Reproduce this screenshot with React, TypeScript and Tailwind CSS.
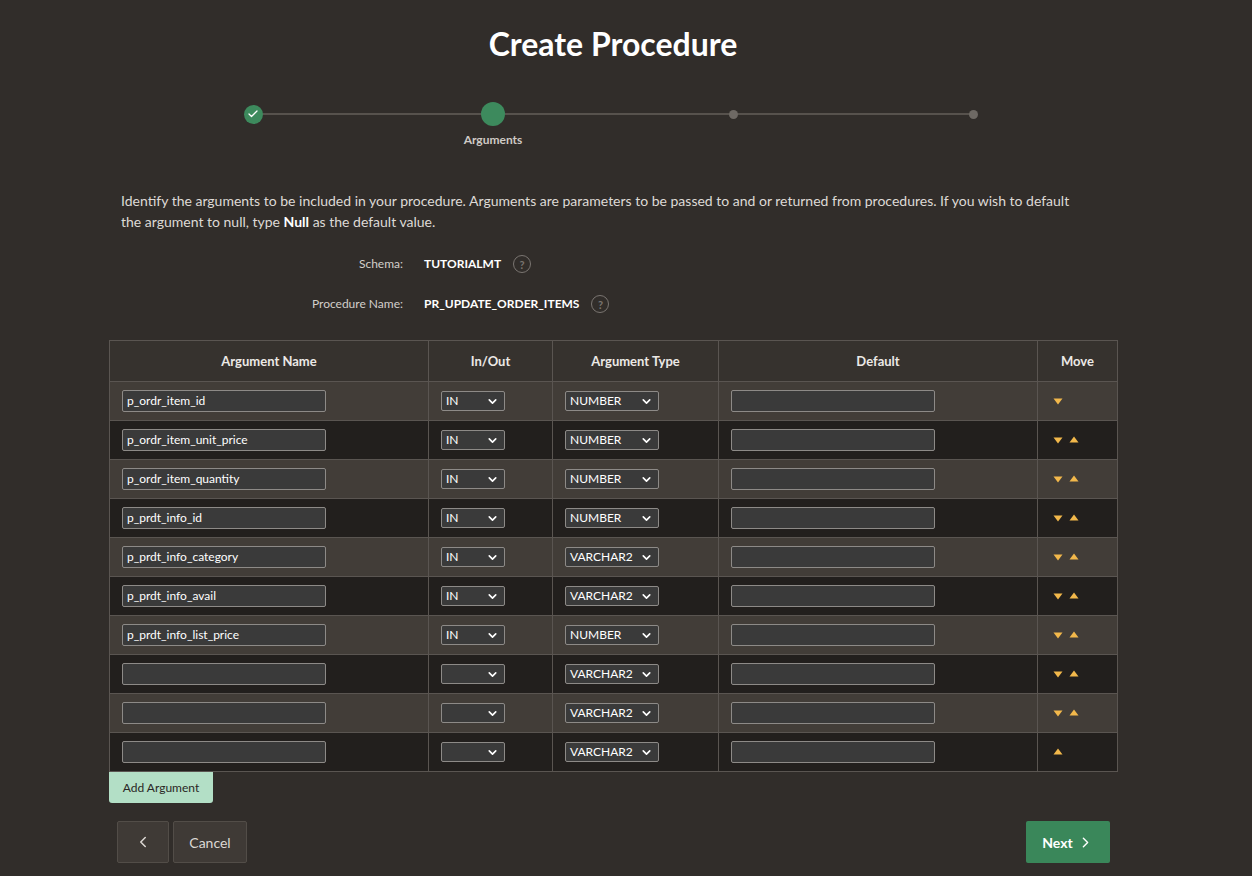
import { ChevronDown, ChevronLeft, ChevronRight, Check } from "lucide-react"

type Row = { name: string; io: string; type: string; down: boolean; up: boolean }

const rows: Row[] = [
  { name: "p_ordr_item_id", io: "IN", type: "NUMBER", down: true, up: false },
  { name: "p_ordr_item_unit_price", io: "IN", type: "NUMBER", down: true, up: true },
  { name: "p_ordr_item_quantity", io: "IN", type: "NUMBER", down: true, up: true },
  { name: "p_prdt_info_id", io: "IN", type: "NUMBER", down: true, up: true },
  { name: "p_prdt_info_category", io: "IN", type: "VARCHAR2", down: true, up: true },
  { name: "p_prdt_info_avail", io: "IN", type: "VARCHAR2", down: true, up: true },
  { name: "p_prdt_info_list_price", io: "IN", type: "NUMBER", down: true, up: true },
  { name: "", io: "", type: "VARCHAR2", down: true, up: true },
  { name: "", io: "", type: "VARCHAR2", down: true, up: true },
  { name: "", io: "", type: "VARCHAR2", down: false, up: true },
]

function Select({ value, width }: { value: string; width: string }) {
  return (
    <div
      className={`${width} flex h-[20px] items-center justify-between rounded-[2px] border border-[#8d8a87] bg-[#3a3a3a] pl-[4px] pr-[5px] text-[12px] text-white`}
    >
      <span>{value}</span>
      <ChevronDown className="h-[13px] w-[13px] text-white" strokeWidth={3} />
    </div>
  )
}

function TextBox({ value }: { value: string }) {
  return (
    <div className="flex h-[22px] w-[204px] items-center rounded-[2px] border border-[#8d8a87] bg-[#3a3a3a] px-[4px] text-[12px] text-white">
      {value}
    </div>
  )
}

function Down() {
  return (
    <svg width="10" height="8" viewBox="0 0 10 8">
      <path d="M0.5 1.5h9L5 7.5z" fill="#f2b84b" />
    </svg>
  )
}

function Up() {
  return (
    <svg width="10" height="8" viewBox="0 0 10 8">
      <path d="M0.5 6.5h9L5 0.5z" fill="#f2b84b" />
    </svg>
  )
}

function Help() {
  return (
    <span className="flex h-[18px] w-[18px] items-center justify-center rounded-full border-[1.5px] border-[#7a7571] text-[11px] font-bold leading-none text-[#7a7571]">
      ?
    </span>
  )
}

export default function App() {
  return (
    <div className="min-h-screen w-full bg-[#312d2a] font-['Lato',sans-serif] text-[#e7e4e1]">
      <div className="w-[1226px] pb-[13px]">
        {/* Title */}
        <h1 className="pt-[24px] text-center text-[32px] font-bold leading-[40px] text-white">Create Procedure</h1>

        {/* Stepper */}
        <div className="relative mx-auto mt-[38px] flex w-[744px] items-center justify-between">
          <div className="absolute left-[12px] right-[12px] top-[11px] h-[2px] bg-[#57524d]" />
          <div className="relative flex h-[24px] w-[24px] items-center justify-center">
            <span className="flex h-[19px] w-[19px] items-center justify-center rounded-full bg-[#3d8a5d]">
              <Check className="h-[12px] w-[12px] text-white" strokeWidth={2.5} />
            </span>
          </div>
          <div className="relative flex h-[24px] w-[24px] items-center justify-center">
            <span className="h-[24px] w-[24px] rounded-full bg-[#3d8a5d]" />
            <span className="absolute top-[29px] left-1/2 -translate-x-1/2 text-[12px] font-bold text-[#cfcac5]">
              Arguments
            </span>
          </div>
          <div className="relative flex h-[24px] w-[24px] items-center justify-center">
            <span className="h-[9px] w-[9px] rounded-full bg-[#6e6964]" />
          </div>
          <div className="relative flex h-[24px] w-[24px] items-center justify-center">
            <span className="h-[9px] w-[9px] rounded-full bg-[#6e6964]" />
          </div>
        </div>

        {/* Description */}
        <p className="mt-[64px] w-[1086px] pl-[121px] pr-[5px] text-[14px] leading-[21px] text-[#dedad6]">
          Identify the arguments to be included in your procedure. Arguments are parameters to be passed to and or returned
          from procedures. If you wish to default the argument to null, type <b className="text-white">Null</b> as the
          default value.
        </p>

        {/* Info */}
        <div className="mt-[22px] flex flex-col gap-[20px] pl-[121px]">
          <div className="flex h-[20px] items-center gap-[21px]">
            <span className="w-[282px] text-right text-[12px] text-[#d3cfcb]">Schema:</span>
            <span className="text-[12px] font-bold text-white">TUTORIALMT</span>
            <span className="ml-[-9px]">
              <Help />
            </span>
          </div>
          <div className="flex h-[20px] items-center gap-[21px]">
            <span className="w-[282px] text-right text-[12px] text-[#d3cfcb]">Procedure Name:</span>
            <span className="text-[12px] font-bold text-white">PR_UPDATE_ORDER_ITEMS</span>
            <span className="ml-[-9px]">
              <Help />
            </span>
          </div>
        </div>

        {/* Table */}
        <div className="ml-[109px] mt-[26px] w-[1008px]">
          <table className="w-full table-fixed border-collapse text-[12px]">
            <colgroup>
              <col className="w-[319px]" />
              <col className="w-[124px]" />
              <col className="w-[166px]" />
              <col className="w-[319px]" />
              <col className="w-[80px]" />
            </colgroup>
            <thead>
              <tr className="h-[41px] bg-[#36322e]">
                {["Argument Name", "In/Out", "Argument Type", "Default", "Move"].map((h) => (
                  <th key={h} className="border border-[#5a5551] pt-[1px] text-center text-[13px] font-bold text-[#ece9e6]">
                    {h}
                  </th>
                ))}
              </tr>
            </thead>
            <tbody>
              {rows.map((r, i) => (
                <tr key={i} className={`h-[39px] ${i % 2 === 0 ? "bg-[#423d38]" : "bg-[#221f1d]"}`}>
                  <td className="border border-[#5a5551] pl-[12px]">
                    <TextBox value={r.name} />
                  </td>
                  <td className="border border-[#5a5551] pl-[12px]">
                    <Select value={r.io} width="w-[64px]" />
                  </td>
                  <td className="border border-[#5a5551] pl-[12px]">
                    <Select value={r.type} width="w-[94px]" />
                  </td>
                  <td className="border border-[#5a5551] pl-[12px]">
                    <TextBox value="" />
                  </td>
                  <td className="border border-[#5a5551] pl-[15px]">
                    <div className="flex items-center gap-[6px]">
                      {r.down && <Down />}
                      {r.up && <Up />}
                    </div>
                  </td>
                </tr>
              ))}
            </tbody>
          </table>
          <button className="flex h-[31px] w-[104px] items-center justify-center rounded-b-[3px] bg-[#b3dfc6] text-[12px] text-[#2a2725]">
            Add Argument
          </button>

          {/* Footer buttons */}
          <div className="mt-[18px] flex items-center justify-between pl-[8px] pr-[7px]">
            <div className="flex gap-[4px]">
              <button className="flex h-[42px] w-[52px] items-center justify-center rounded-[2px] border border-[#524d48] bg-[#3f3a36] text-[#dcd8d4]">
                <ChevronLeft className="h-[18px] w-[18px]" strokeWidth={2} />
              </button>
              <button className="flex h-[42px] w-[74px] items-center justify-center rounded-[2px] border border-[#524d48] bg-[#3f3a36] text-[14px] text-[#dcd8d4]">
                Cancel
              </button>
            </div>
            <button className="flex h-[42px] w-[84px] items-center justify-center gap-[4px] rounded-[2px] bg-[#3a875a] text-[14px] font-bold text-white">
              Next
              <ChevronRight className="h-[17px] w-[17px]" strokeWidth={2} />
            </button>
          </div>
        </div>
      </div>
    </div>
  )
}
